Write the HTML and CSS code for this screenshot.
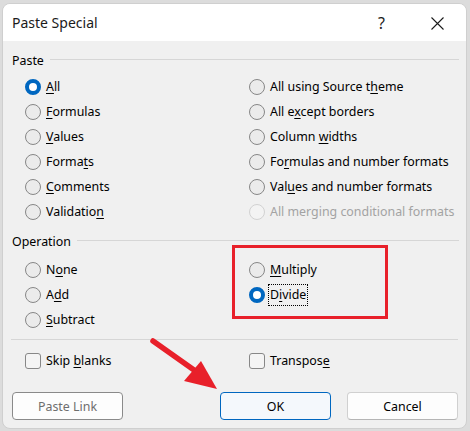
FILE: index.html
```html
<!DOCTYPE html>
<html>
<head>
<meta charset="utf-8">
<link rel="stylesheet" href="styles.css">
</head>
<body>
<div class="screen">
  <div class="dialog">
    <div class="titlebar">
      <span class="title">Paste Special</span>
      <div class="controls">
        <span class="help">?</span>
        <svg class="close" width="13" height="13" viewBox="0 0 13 13"><path d="M0.5 0.5 L12.5 12.5 M12.5 0.5 L0.5 12.5" stroke="#1b1b1b" stroke-width="1.1" fill="none"/></svg>
      </div>
    </div>
    <div class="content">
      <div class="legend"><span>Paste</span><i class="rule"></i></div>
      <div class="opts">
        <label class="opt"><span class="radio on"></span><span><u>A</u>ll</span></label>
        <label class="opt"><span class="radio"></span><span>All using Source t<u>h</u>eme</span></label>
        <label class="opt"><span class="radio"></span><span><u>F</u>ormulas</span></label>
        <label class="opt"><span class="radio"></span><span>All e<u>x</u>cept borders</span></label>
        <label class="opt"><span class="radio"></span><span><u>V</u>alues</span></label>
        <label class="opt"><span class="radio"></span><span>Column <u>w</u>idths</span></label>
        <label class="opt"><span class="radio"></span><span>Forma<u>t</u>s</span></label>
        <label class="opt"><span class="radio"></span><span>Fo<u>r</u>mulas and number formats</span></label>
        <label class="opt"><span class="radio"></span><span><u>C</u>omments</span></label>
        <label class="opt"><span class="radio"></span><span>Val<u>u</u>es and number formats</span></label>
        <label class="opt"><span class="radio"></span><span>Validatio<u>n</u></span></label>
        <label class="opt disabled"><span class="radio"></span><span>All merging conditional formats</span></label>
      </div>
      <div class="legend op"><span>Operation</span><i class="rule"></i></div>
      <div class="opts">
        <label class="opt"><span class="radio"></span><span>N<u>o</u>ne</span></label>
        <label class="opt"><span class="radio"></span><span><u>M</u>ultiply</span></label>
        <label class="opt"><span class="radio"></span><span>A<u>d</u>d</span></label>
        <label class="opt"><span class="radio on"></span><span class="focus">D<u>i</u>vide</span></label>
        <label class="opt"><span class="radio"></span><span><u>S</u>ubtract</span></label>
      </div>
      <div class="sep"></div>
      <div class="opts checks">
        <label class="opt"><span class="check"></span><span>Skip <u>b</u>lanks</span></label>
        <label class="opt"><span class="check"></span><span>Transpos<u>e</u></span></label>
      </div>
      <div class="buttons">
        <button class="btn link">Paste Link</button>
        <span class="spacer"></span>
        <button class="btn ok">OK</button>
        <button class="btn">Cancel</button>
      </div>
    </div>
    <div class="redbox"></div>
    <svg class="arrow" width="465" height="426" viewBox="0 0 465 426">
      <line x1="151" y1="338" x2="192" y2="367" stroke="#e8202a" stroke-width="5.5" stroke-linecap="round"/>
      <polygon points="199,358 182,378 215,386" fill="#e8202a"/>
    </svg>
  </div>
</div>
</body>
</html>
```
FILE: styles.css
```css
* { box-sizing: border-box; }
html, body { margin: 0; padding: 0; }
body {
  background: #dcdcdc;
  font-family: "Segoe UI", "Noto Sans", "Open Sans", sans-serif;
  color: #000;
}
.screen {
  width: 470px;
  height: 431px;
  padding: 3px 3px 2px 2px;
}
.dialog {
  position: relative;
  width: 465px;
  height: 426px;
  background: #f0f0f0;
  border-radius: 8px;
  border: 1px solid #cfcfcf;
  overflow: hidden;
}
.titlebar {
  height: 37px;
  background: #fff;
  display: flex;
  align-items: center;
  padding-left: 9px;
}
.title {
  flex: 1;
  font-size: 14px;
  color: #1b1b1b;
  margin-top: -1px;
}
.controls {
  display: flex;
  align-items: center;
  padding-right: 22px;
}
.help {
  font-size: 16px;
  color: #1b1b1b;
  margin-right: 46px;
}
.close { display: block; margin-top: 1px; }
.content {
  padding: 9px 7px 0 9px;
  font-size: 12.4px;
}
.legend {
  height: 20px;
  display: flex;
  align-items: center;
}
.legend .rule {
  flex: 1;
  height: 1px;
  background: #d6d6d6;
  margin-left: 6px;
  position: relative;
  top: -1px;
}
.legend.op { margin-top: 7px; }
.opts {
  display: grid;
  grid-template-columns: 224px 1fr;
  grid-auto-rows: 25px;
  padding-left: 13px;
  margin-top: 4px;
}
.legend.op + .opts { margin-top: 6px; }
.opt {
  display: flex;
  align-items: center;
  gap: 5px;
  white-space: nowrap;
}
.opt u { text-underline-offset: 2px; }
.radio {
  width: 16px;
  height: 16px;
  border-radius: 50%;
  border: 1px solid #878787;
  background: #ebebeb;
  flex: none;
}
.radio.on {
  border: 4.5px solid #0067c0;
  background: #fff;
}
.disabled { color: #a3a3a3; }
.disabled .radio { border-color: #d2d2d2; background: #f3f3f3; }
.focus {
  border: 1px dotted #000;
  padding: 1px 1px 2px 1px;
  margin-left: -2px;
}
.sep {
  height: 1px;
  background: #d6d6d6;
  margin: 7px 1px 0 -1px;
}
.opts.checks { margin-top: 8px; }
.check {
  width: 16px;
  height: 16px;
  border-radius: 3px;
  border: 1px solid #878787;
  background: #f4f4f4;
  flex: none;
}
.buttons {
  display: flex;
  margin-top: 19px;
  gap: 16px;
  padding-right: 1px;
}
.spacer { flex: 1; }
.btn {
  width: 111px;
  height: 28px;
  border-radius: 4px;
  border: 1px solid #d0d0d0;
  border-bottom-color: #b5b5b5;
  background: #fdfdfd;
  font-family: inherit;
  font-size: 12.4px;
  color: #000;
  padding: 0;
}
.btn.link {
  border: 1px solid #8a8a8a;
  color: #6e6e6e;
}
.btn.ok {
  border: 1px solid #0067c0;
  background: #f4f8fc;
}
.redbox {
  position: absolute;
  left: 229px;
  top: 241px;
  width: 156px;
  height: 74px;
  border: 3px solid #e8202a;
}
.arrow {
  position: absolute;
  left: -1px;
  top: -1px;
  pointer-events: none;
}
```
